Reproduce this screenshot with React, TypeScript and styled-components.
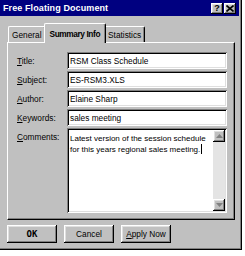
import React from 'react';
import styled, { createGlobalStyle, css } from 'styled-components';

const GlobalStyle = createGlobalStyle`
  html, body {
    margin: 0;
    padding: 0;
    background: #ffffff;
  }
  body {
    font-family: "Liberation Sans", Arial, sans-serif;
    font-size: 8.3px;
    color: #000;
  }
`;

const raised = css`
  box-shadow: inset -1px -1px #000000, inset 1px 1px #ffffff,
    inset -2px -2px #808080, inset 2px 2px #dfdfdf;
`;

const sunken = css`
  box-shadow: inset 1px 1px #808080, inset -1px -1px #ffffff,
    inset 2px 2px #000000, inset -2px -2px #dfdfdf;
`;

const Window = styled.div`
  width: 242px;
  height: 250px;
  box-sizing: border-box;
  background: #c0c0c0;
  border-right: 1px solid #000;
  border-bottom: 1px solid #000;
  box-shadow: inset -1px -1px #808080;
  display: flex;
  flex-direction: column;
`;

const TitleBar = styled.div`
  height: 16px;
  background: #000080;
  display: flex;
  align-items: center;
  padding: 0 3px 0 3px;
  margin-right: 2px;
`;

const Caption = styled.span`
  flex: 1;
  color: #fff;
  font-weight: bold;
  font-size: 9px;
  letter-spacing: 0.1px;
`;

const CaptionButton = styled.div`
  width: 12px;
  height: 11px;
  background: #c0c0c0;
  ${raised};
  display: flex;
  align-items: center;
  justify-content: center;
  font-weight: bold;
  font-size: 9px;
  line-height: 1;
  & + & {
    margin-left: 1px;
  }
`;

const Body = styled.div`
  flex: 1;
  display: flex;
  flex-direction: column;
  padding: 7px 6px 0 7px;
`;

const TabStrip = styled.div`
  display: flex;
  align-items: flex-end;
  height: 19px;
  padding-left: 1px;
`;

const Tab = styled.div<{ $active?: boolean }>`
  position: relative;
  box-sizing: border-box;
  height: ${p => (p.$active ? 20 : 16)}px;
  padding: 0 ${p => (p.$active ? 5 : 3)}px;
  margin: 0 ${p => (p.$active ? -2 : 0)}px ${p => (p.$active ? -1 : 0)}px;
  z-index: ${p => (p.$active ? 1 : 0)};
  background: #c0c0c0;
  border-top: 1px solid #fff;
  border-left: 1px solid #fff;
  border-right: 1px solid #000;
  border-top-left-radius: 2px;
  border-top-right-radius: 2px;
  box-shadow: inset -1px 0 #808080;
  display: flex;
  align-items: center;
  font-weight: ${p => (p.$active ? 'bold' : 'normal')};
  letter-spacing: ${p => (p.$active ? '-0.4px' : '0')};
  white-space: nowrap;
`;

const Panel = styled.div`
  box-sizing: border-box;
  height: 178px;
  border-top: 1px solid #fff;
  border-left: 1px solid #fff;
  border-right: 1px solid #000;
  border-bottom: 1px solid #000;
  box-shadow: inset -1px -1px #808080;
  padding: 9px 6px 6px 9px;
  display: grid;
  grid-template-columns: 50px 160px;
  grid-template-rows: 17px 17px 17px 17px 85px;
  row-gap: 2px;
`;

const Label = styled.label<{ $top?: boolean }>`
  align-self: ${p => (p.$top ? 'start' : 'center')};
  padding-top: ${p => (p.$top ? 4 : 0)}px;
`;

const Key = styled.span`
  text-decoration: underline;
`;

const Field = styled.div`
  background: #fff;
  ${sunken};
  display: flex;
  align-items: center;
  padding: 0 3px;
  white-space: nowrap;
`;

const Memo = styled.div`
  background: #fff;
  ${sunken};
  padding: 2px;
  display: flex;
`;

const MemoText = styled.div`
  flex: 1;
  min-width: 0;
  padding: 3px 1px 0 1px;
  line-height: 11px;
  font-size: 8px;
  white-space: nowrap;
  overflow: hidden;
`;

const Caret = styled.span`
  display: inline-block;
  width: 1px;
  height: 10px;
  background: #000;
  vertical-align: -2px;
  margin-left: 1px;
`;

const ScrollBar = styled.div`
  width: 12px;
  display: flex;
  flex-direction: column;
  background: #e4e4e4;
`;

const ScrollButton = styled.div`
  height: 12px;
  background: #c0c0c0;
  ${raised};
  display: flex;
  align-items: center;
  justify-content: center;
`;

const Track = styled.div`
  flex: 1;
`;

const Buttons = styled.div`
  display: flex;
  gap: 7px;
  margin-top: 5px;
`;

const Button = styled.div<{ $bold?: boolean }>`
  width: 50px;
  height: 18px;
  background: #c0c0c0;
  ${raised};
  display: flex;
  align-items: center;
  justify-content: center;
  font-weight: ${p => (p.$bold ? 'bold' : 'normal')};
  font-family: ${p => (p.$bold ? '"DejaVu Sans Mono", monospace' : 'inherit')};
  font-size: ${p => (p.$bold ? '9px' : '8.3px')};
`;

const Arrow = ({ up }: { up?: boolean }) => (
  <svg width="7" height="4" viewBox="0 0 7 4">
    <path d={up ? 'M3.5 0 L7 4 L0 4 Z' : 'M0 0 L7 0 L3.5 4 Z'} fill="#808080" />
  </svg>
);

const fields = [
  { key: 'T', rest: 'itle:', value: 'RSM Class Schedule' },
  { key: 'S', rest: 'ubject:', value: 'ES-RSM3.XLS' },
  { key: 'A', rest: 'uthor:', value: 'Elaine Sharp' },
  { key: 'K', rest: 'eywords:', value: 'sales meeting' },
];

export default function App() {
  return (
    <>
      <GlobalStyle />
      <Window>
        <TitleBar>
          <Caption>Free Floating Document</Caption>
          <CaptionButton>?</CaptionButton>
          <CaptionButton>
            <svg width="8" height="7" viewBox="0 0 8 7">
              <path d="M0.5 0.5 L7.5 6.5 M7.5 0.5 L0.5 6.5" stroke="#000" strokeWidth="1.6" />
            </svg>
          </CaptionButton>
        </TitleBar>
        <Body>
          <TabStrip>
            <Tab>General</Tab>
            <Tab $active>Summary Info</Tab>
            <Tab>Statistics</Tab>
          </TabStrip>
          <Panel>
            {fields.map(f => (
              <React.Fragment key={f.key}>
                <Label>
                  <Key>{f.key}</Key>
                  {f.rest}
                </Label>
                <Field>{f.value}</Field>
              </React.Fragment>
            ))}
            <Label $top>
              <Key>C</Key>omments:
            </Label>
            <Memo>
              <MemoText>
                Latest version of the session schedule
                <br />
                for this years regional sales meeting.
                <Caret />
              </MemoText>
              <ScrollBar>
                <ScrollButton>
                  <Arrow up />
                </ScrollButton>
                <Track />
                <ScrollButton>
                  <Arrow />
                </ScrollButton>
              </ScrollBar>
            </Memo>
          </Panel>
          <Buttons>
            <Button $bold>OK</Button>
            <Button>Cancel</Button>
            <Button>
              <span>
                <Key>A</Key>pply Now
              </span>
            </Button>
          </Buttons>
        </Body>
      </Window>
    </>
  );
}
